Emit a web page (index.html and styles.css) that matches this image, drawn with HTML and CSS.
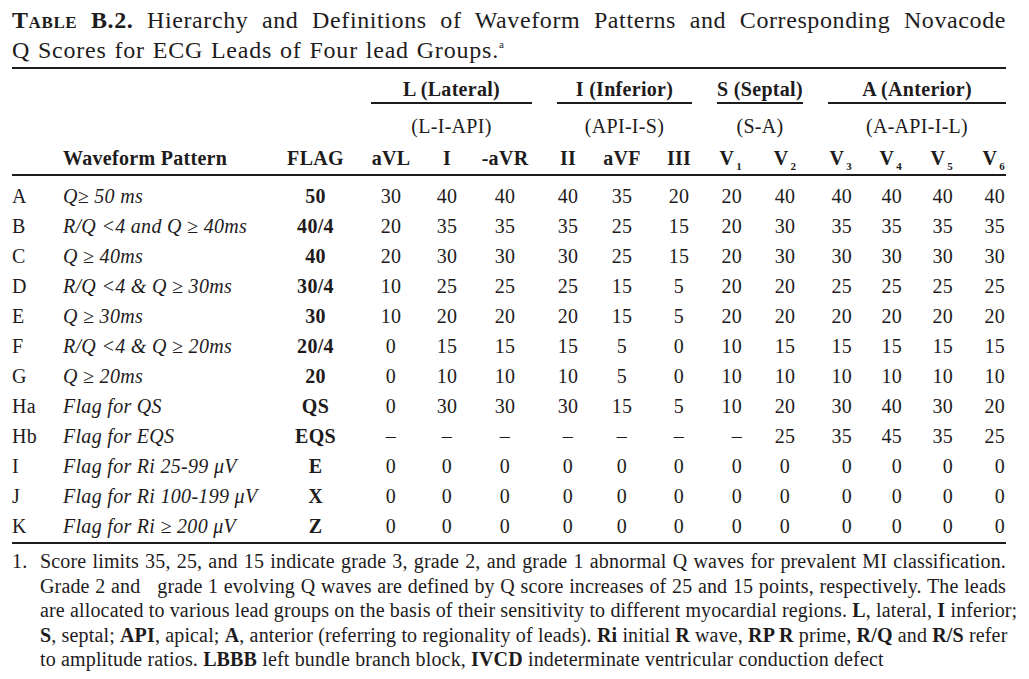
FILE: index.html
```html
<!DOCTYPE html>
<html>
<head>
<meta charset="utf-8">
<link rel="stylesheet" href="styles.css">
</head>
<body>
<div class="page">
  <div class="title">
    <div class="tline tline-just"><b><span class="sc">Table</span> B.2.</b> Hierarchy and Definitions of Waveform Patterns and Corresponding Novacode</div>
    <div class="tline">Q Scores for ECG Leads of Four lead Groups.<sup class="sup">a</sup></div>
  </div>
  <table class="tbl">
    <colgroup>
      <col class="w51"><col class="w207"><col class="w91">
      <col class="w60"><col class="w52"><col class="w64">
      <col class="w62"><col class="w46"><col class="w68">
      <col class="w46"><col class="w52">
      <col class="w51"><col class="w50"><col class="w51"><col class="w43">
    </colgroup>
    <thead>
      <tr class="hr1">
        <th colspan="3"></th>
        <th colspan="3"><div class="grp g-l">L (Lateral)</div></th>
        <th colspan="3"><div class="grp g-i">I (Inferior)</div></th>
        <th colspan="2"><div class="grp g-s">S (Septal)</div></th>
        <th colspan="4"><div class="grp g-a">A (Anterior)</div></th>
      </tr>
      <tr class="hr2">
        <th colspan="3"></th>
        <th colspan="3"><div class="sub g-l">(L-I-API)</div></th>
        <th colspan="3"><div class="sub g-i">(API-I-S)</div></th>
        <th colspan="2"><div class="sub g-s">(S-A)</div></th>
        <th colspan="4"><div class="sub g-a">(A-API-I-L)</div></th>
      </tr>
      <tr class="hr3">
        <th></th>
        <th class="left">Waveform Pattern</th>
        <th class="flag">FLAG</th>
        <th>aVL</th><th>I</th><th>-aVR</th>
        <th>II</th><th>aVF</th><th>III</th>
        <th class="r1">V<sub>1</sub></th><th>V<sub>2</sub></th>
        <th class="r10">V<sub>3</sub></th><th class="r10">V<sub>4</sub></th><th class="r10">V<sub>5</sub></th><th class="r1x">V<sub>6</sub></th>
      </tr>
    </thead>
    <tbody>
      <tr class="first"><td class="lt">A</td><td class="pat">Q≥ 50 ms</td><td class="flag b">50</td><td>30</td><td>40</td><td>40</td><td>40</td><td>35</td><td>20</td><td class="r1">20</td><td>40</td><td class="r10">40</td><td class="r10">40</td><td class="r10">40</td><td class="r1x">40</td></tr>
      <tr><td class="lt">B</td><td class="pat">R/Q &lt;4 and Q ≥ 40ms</td><td class="flag b">40/4</td><td>20</td><td>35</td><td>35</td><td>35</td><td>25</td><td>15</td><td class="r1">20</td><td>30</td><td class="r10">35</td><td class="r10">35</td><td class="r10">35</td><td class="r1x">35</td></tr>
      <tr><td class="lt">C</td><td class="pat">Q ≥ 40ms</td><td class="flag b">40</td><td>20</td><td>30</td><td>30</td><td>30</td><td>25</td><td>15</td><td class="r1">20</td><td>30</td><td class="r10">30</td><td class="r10">30</td><td class="r10">30</td><td class="r1x">30</td></tr>
      <tr><td class="lt">D</td><td class="pat">R/Q &lt;4 &amp; Q ≥ 30ms</td><td class="flag b">30/4</td><td>10</td><td>25</td><td>25</td><td>25</td><td>15</td><td>5</td><td class="r1">20</td><td>20</td><td class="r10">25</td><td class="r10">25</td><td class="r10">25</td><td class="r1x">25</td></tr>
      <tr><td class="lt">E</td><td class="pat">Q ≥ 30ms</td><td class="flag b">30</td><td>10</td><td>20</td><td>20</td><td>20</td><td>15</td><td>5</td><td class="r1">20</td><td>20</td><td class="r10">20</td><td class="r10">20</td><td class="r10">20</td><td class="r1x">20</td></tr>
      <tr><td class="lt">F</td><td class="pat">R/Q &lt;4 &amp; Q ≥ 20ms</td><td class="flag b">20/4</td><td>0</td><td>15</td><td>15</td><td>15</td><td>5</td><td>0</td><td class="r1">10</td><td>15</td><td class="r10">15</td><td class="r10">15</td><td class="r10">15</td><td class="r1x">15</td></tr>
      <tr><td class="lt">G</td><td class="pat">Q ≥ 20ms</td><td class="flag b">20</td><td>0</td><td>10</td><td>10</td><td>10</td><td>5</td><td>0</td><td class="r1">10</td><td>10</td><td class="r10">10</td><td class="r10">10</td><td class="r10">10</td><td class="r1x">10</td></tr>
      <tr><td class="lt">Ha</td><td class="pat">Flag for QS</td><td class="flag b">QS</td><td>0</td><td>30</td><td>30</td><td>30</td><td>15</td><td>5</td><td class="r1">10</td><td>20</td><td class="r10">30</td><td class="r10">40</td><td class="r10">30</td><td class="r1x">20</td></tr>
      <tr><td class="lt">Hb</td><td class="pat">Flag for EQS</td><td class="flag b">EQS</td><td>–</td><td>–</td><td>–</td><td>–</td><td>–</td><td>–</td><td class="r1">–</td><td>25</td><td class="r10">35</td><td class="r10">45</td><td class="r10">35</td><td class="r1x">25</td></tr>
      <tr><td class="lt">I</td><td class="pat">Flag for Ri 25-99 μV</td><td class="flag b">E</td><td>0</td><td>0</td><td>0</td><td>0</td><td>0</td><td>0</td><td class="r1">0</td><td>0</td><td class="r10">0</td><td class="r10">0</td><td class="r10">0</td><td class="r1x">0</td></tr>
      <tr><td class="lt">J</td><td class="pat">Flag for Ri 100-199 μV</td><td class="flag b">X</td><td>0</td><td>0</td><td>0</td><td>0</td><td>0</td><td>0</td><td class="r1">0</td><td>0</td><td class="r10">0</td><td class="r10">0</td><td class="r10">0</td><td class="r1x">0</td></tr>
      <tr class="last"><td class="lt">K</td><td class="pat">Flag for Ri ≥ 200 μV</td><td class="flag b">Z</td><td>0</td><td>0</td><td>0</td><td>0</td><td>0</td><td>0</td><td class="r1">0</td><td>0</td><td class="r10">0</td><td class="r10">0</td><td class="r10">0</td><td class="r1x">0</td></tr>
    </tbody>
  </table>
  <div class="note">
    <div class="num">1.</div>
    <div class="ntext">
      <span class="nl">Score limits 35, 25, and 15 indicate grade 3, grade 2, and grade 1 abnormal Q waves for prevalent MI classification.</span>
      <span class="nl">Grade 2 and&nbsp;&nbsp; grade 1 evolving Q waves are defined by Q score increases of 25 and 15 points, respectively. The leads</span>
      <span class="nl">are allocated to various lead groups on the basis of their sensitivity to different myocardial regions. <b>L</b>, lateral, <b>I</b> inferior;</span>
      <span class="nl"><b>S</b>, septal; <b>API</b>, apical; <b>A</b>, anterior (referring to regionality of leads). <b>Ri</b> initial <b>R</b> wave, <b>RP R</b> prime, <b>R/Q</b> and <b>R/S</b> refer</span>
      <span class="nl nl-last">to amplitude ratios. <b>LBBB</b> left bundle branch block, <b>IVCD</b> indeterminate ventricular conduction defect</span>
    </div>
  </div>
</div>
</body>
</html>
```

FILE: styles.css
```css
html, body {
  margin: 0;
  padding: 0;
  background: #ffffff;
}
body {
  font-family: "Liberation Serif", "Times New Roman", serif;
  color: #1e1b1c;
}
.page {
  width: 994px;
  padding: 5px 0 0 12px;
}
.title {
  font-size: 24px;
  line-height: 30px;
  letter-spacing: 0.8px;
  word-spacing: 1px;
}
.tline {
  white-space: nowrap;
}
.tline-just {
  text-align: justify;
  text-align-last: justify;
  letter-spacing: 0.6px;
}
.sc {
  font-variant: small-caps;
}
.sup {
  font-size: 11px;
  vertical-align: 10px;
  line-height: 0;
}
.tbl {
  width: 994px;
  table-layout: fixed;
  border-collapse: collapse;
  border-top: 2px solid #1e1b1c;
  border-bottom: 2px solid #1e1b1c;
  margin-top: 2px;
  font-size: 20px;
  letter-spacing: 0.3px;
}
.w51 { width: 51px; }
.w207 { width: 207px; }
.w91 { width: 91px; }
.w60 { width: 60px; }
.w52 { width: 52px; }
.w64 { width: 64px; }
.w62 { width: 62px; }
.w46 { width: 46px; }
.w68 { width: 68px; }
.w50 { width: 50px; }
.w43 { width: 43px; }
.tbl th, .tbl td {
  padding: 0;
  text-align: center;
  line-height: 30px;
  white-space: nowrap;
}
.tbl th {
  font-weight: bold;
}
.hr1 th {
  padding-top: 8px;
}
.grp {
  line-height: 25px;
  border-bottom: 2px solid #1e1b1c;
}
.hr2 th {
  padding-top: 7px;
  font-weight: normal;
}
.sub {
  line-height: 30px;
}
.g-l { margin: 0 5px 0 10px; }
.g-i { margin: 0 21px 0 20px; }
.g-s { margin: 0 8px 0 4px; }
.g-a { margin: 0 0 0 17px; }
.hr3 th {
  padding-top: 2px;
  padding-bottom: 1px;
  border-bottom: 2px solid #1e1b1c;
}
.tbl th.left {
  text-align: left;
}
.tbl .r1 {
  text-align: right;
  padding-right: 17px;
}
.tbl .r10 {
  text-align: right;
  padding-right: 10px;
}
.tbl .r1x {
  text-align: right;
  padding-right: 1px;
}
.tbl sub {
  font-size: 11px;
  vertical-align: -5px;
  line-height: 0;
  margin-left: 2px;
}
.tbl td.lt {
  text-align: left;
}
.tbl td.pat {
  text-align: left;
  font-style: italic;
}
.tbl td.b {
  font-weight: bold;
}
.first td {
  padding-top: 5px;
}
.last td {
  padding-bottom: 1px;
}
.note {
  display: flex;
  font-size: 20px;
  line-height: 24.5px;
  letter-spacing: 0.15px;
  margin-top: 5px;
}
.num {
  width: 28px;
  flex: none;
}
.ntext {
  width: 966px;
}
.nl {
  display: block;
  text-align: justify;
  text-align-last: justify;
  white-space: nowrap;
}
.nl-last {
  text-align-last: left;
}
```
